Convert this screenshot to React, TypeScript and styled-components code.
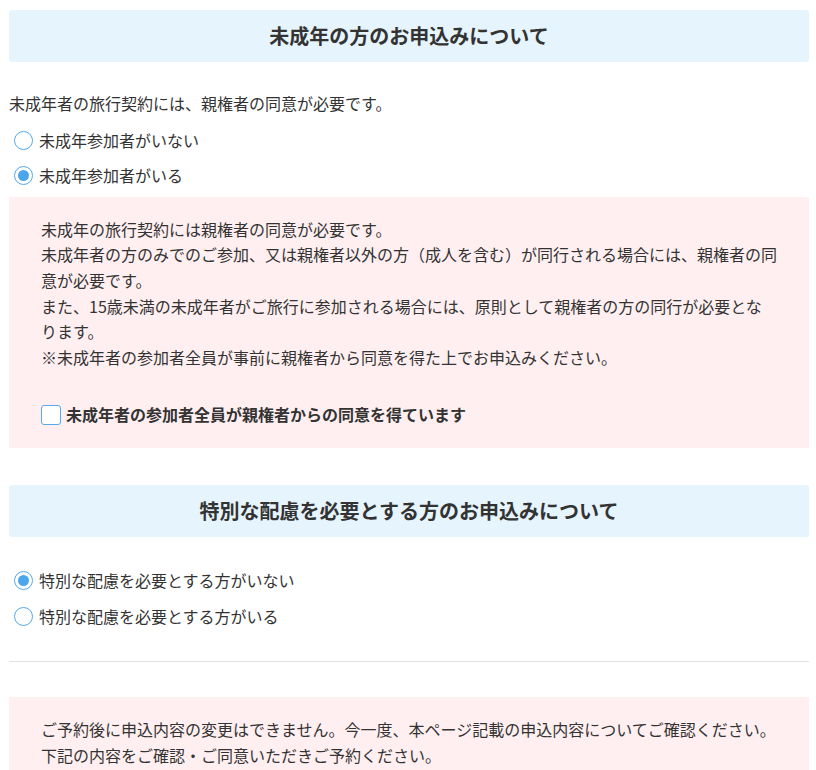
import React, { useState } from 'react';
import styled, { createGlobalStyle, css } from 'styled-components';

const GlobalStyle = createGlobalStyle`
  * {
    box-sizing: border-box;
  }
  body {
    margin: 0;
    background: #fff;
    color: #333;
    font-family: "Noto Sans CJK JP", "Noto Sans", sans-serif;
    font-size: 16px;
    line-height: 1.6;
  }
`;

const Page = styled.div`
  padding: 10px 7px 0 9px;
`;

const Section = styled.section<{ $top?: number }>`
  display: flex;
  flex-direction: column;
  margin-top: ${({ $top }) => $top ?? 0}px;
`;

const SectionTitle = styled.h2`
  margin: 0 0 29px;
  padding: 12px 16px;
  background: #e6f4fd;
  border-radius: 3px;
  font-size: 20px;
  font-weight: 700;
  line-height: 28px;
  text-align: center;
  color: #333;
`;

const Lead = styled.p`
  margin: 0 0 11px;
`;

const RadioList = styled.div<{ $top?: number }>`
  display: flex;
  flex-direction: column;
  gap: 10px;
  margin-top: ${({ $top }) => $top ?? 0}px;
`;

const Choice = styled.label`
  display: flex;
  align-items: center;
  gap: 6px;
  padding-left: 5px;
  cursor: pointer;
`;

const HiddenInput = styled.input`
  position: absolute;
  opacity: 0;
  pointer-events: none;
`;

const RadioMark = styled.span<{ $checked: boolean }>`
  width: 19px;
  height: 19px;
  flex: none;
  border-radius: 50%;
  border: 1.5px solid #55a9ec;
  background: #fff;
  position: relative;
  ${({ $checked }) =>
    $checked &&
    css`
      &::after {
        content: '';
        position: absolute;
        inset: 3px;
        border-radius: 50%;
        background: #4ba6ec;
      }
    `}
`;

const Notice = styled.div<{ $top?: number }>`
  margin-top: ${({ $top }) => $top ?? 0}px;
  padding: 20px 32px;
  background: #ffeff0;
`;

const NoticeText = styled.p`
  margin: 0;
`;

const Agree = styled.label`
  display: flex;
  align-items: center;
  gap: 5px;
  margin-top: 32px;
  font-weight: 700;
  cursor: pointer;
`;

const CheckMark = styled.span<{ $checked: boolean }>`
  width: 20px;
  height: 20px;
  flex: none;
  border: 1.5px solid #55a9ec;
  border-radius: 3px;
  background: ${({ $checked }) => ($checked ? '#4ba6ec' : '#fff')};
`;

const Divider = styled.hr`
  margin: 32px 0 35px;
  border: 0;
  border-top: 1px solid #e2e2e2;
`;

type RadioProps = {
  name: string;
  label: string;
  checked: boolean;
  onSelect: () => void;
};

function Radio({ name, label, checked, onSelect }: RadioProps) {
  return (
    <Choice>
      <HiddenInput type="radio" name={name} checked={checked} onChange={onSelect} />
      <RadioMark $checked={checked} />
      {label}
    </Choice>
  );
}

export default function App() {
  const [minor, setMinor] = useState(true);
  const [agreed, setAgreed] = useState(false);
  const [special, setSpecial] = useState(false);

  return (
    <>
      <GlobalStyle />
      <Page>
        <Section>
          <SectionTitle>未成年の方のお申込みについて</SectionTitle>
          <Lead>未成年者の旅行契約には、親権者の同意が必要です。</Lead>
          <RadioList>
            <Radio
              name="minor"
              label="未成年参加者がいない"
              checked={!minor}
              onSelect={() => setMinor(false)}
            />
            <Radio
              name="minor"
              label="未成年参加者がいる"
              checked={minor}
              onSelect={() => setMinor(true)}
            />
          </RadioList>
          {minor && (
            <Notice $top={8}>
              <NoticeText>
                未成年の旅行契約には親権者の同意が必要です。
                <br />
                未成年者の方のみでのご参加、又は親権者以外の方（成人を含む）が同行される場合には、親権者の同意が必要です。
                <br />
                また、15歳未満の未成年者がご旅行に参加される場合には、原則として親権者の方の同行が必要となります。
                <br />
                ※未成年者の参加者全員が事前に親権者から同意を得た上でお申込みください。
              </NoticeText>
              <Agree>
                <HiddenInput
                  type="checkbox"
                  checked={agreed}
                  onChange={(e) => setAgreed(e.target.checked)}
                />
                <CheckMark $checked={agreed} />
                未成年者の参加者全員が親権者からの同意を得ています
              </Agree>
            </Notice>
          )}
        </Section>

        <Section $top={37}>
          <SectionTitle>特別な配慮を必要とする方のお申込みについて</SectionTitle>
          <RadioList $top={2}>
            <Radio
              name="special"
              label="特別な配慮を必要とする方がいない"
              checked={!special}
              onSelect={() => setSpecial(false)}
            />
            <Radio
              name="special"
              label="特別な配慮を必要とする方がいる"
              checked={special}
              onSelect={() => setSpecial(true)}
            />
          </RadioList>
        </Section>

        <Divider />

        <Notice>
          <NoticeText>
            ご予約後に申込内容の変更はできません。今一度、本ページ記載の申込内容についてご確認ください。
            <br />
            下記の内容をご確認・ご同意いただきご予約ください。
          </NoticeText>
        </Notice>
      </Page>
    </>
  );
}
